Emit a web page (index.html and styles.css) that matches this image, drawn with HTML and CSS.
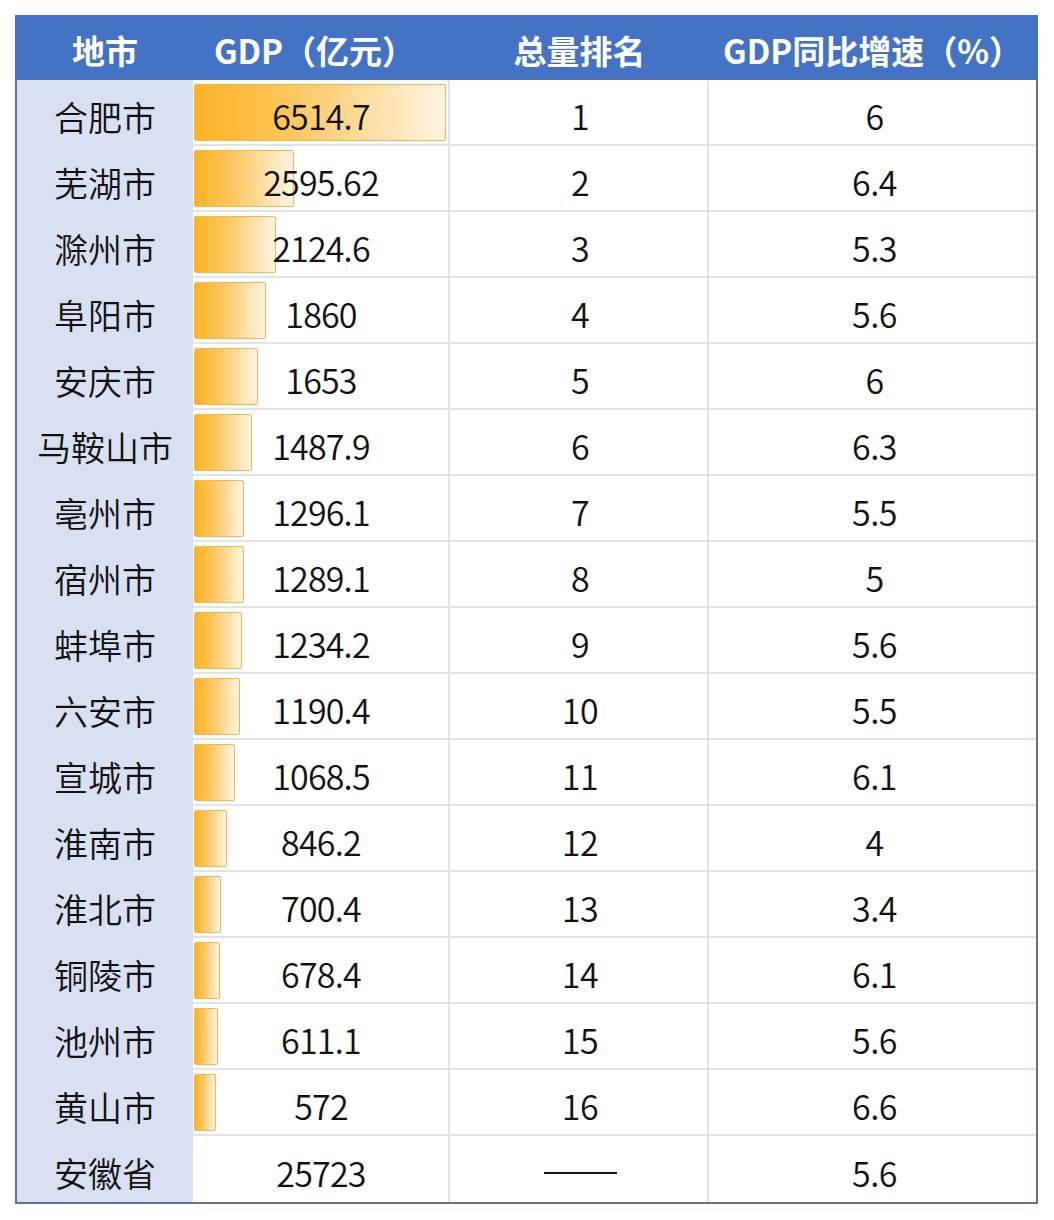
FILE: index.html
```html
<!DOCTYPE html>
<html lang="zh-CN">
<head>
<meta charset="utf-8">
<title>安徽省各地市GDP</title>
<link rel="stylesheet" href="styles.css">
</head>
<body>
<div class="table">
  <div class="head">
    <div class="hc">地市</div>
    <div class="hc">GDP（亿元）</div>
    <div class="hc">总量排名</div>
    <div class="hc">GDP同比增速（%）</div>
  </div>
  <div class="row"><div class="city">合肥市</div><div class="gdp"><span class="bar" style="width:252px"></span><span class="num">6514.7</span></div><div class="rank">1</div><div class="rate">6</div></div>
  <div class="row"><div class="city">芜湖市</div><div class="gdp"><span class="bar" style="width:100px"></span><span class="num">2595.62</span></div><div class="rank">2</div><div class="rate">6.4</div></div>
  <div class="row"><div class="city">滁州市</div><div class="gdp"><span class="bar" style="width:82px"></span><span class="num">2124.6</span></div><div class="rank">3</div><div class="rate">5.3</div></div>
  <div class="row"><div class="city">阜阳市</div><div class="gdp"><span class="bar" style="width:72px"></span><span class="num">1860</span></div><div class="rank">4</div><div class="rate">5.6</div></div>
  <div class="row"><div class="city">安庆市</div><div class="gdp"><span class="bar" style="width:64px"></span><span class="num">1653</span></div><div class="rank">5</div><div class="rate">6</div></div>
  <div class="row"><div class="city">马鞍山市</div><div class="gdp"><span class="bar" style="width:58px"></span><span class="num">1487.9</span></div><div class="rank">6</div><div class="rate">6.3</div></div>
  <div class="row"><div class="city">亳州市</div><div class="gdp"><span class="bar" style="width:50px"></span><span class="num">1296.1</span></div><div class="rank">7</div><div class="rate">5.5</div></div>
  <div class="row"><div class="city">宿州市</div><div class="gdp"><span class="bar" style="width:50px"></span><span class="num">1289.1</span></div><div class="rank">8</div><div class="rate">5</div></div>
  <div class="row"><div class="city">蚌埠市</div><div class="gdp"><span class="bar" style="width:48px"></span><span class="num">1234.2</span></div><div class="rank">9</div><div class="rate">5.6</div></div>
  <div class="row"><div class="city">六安市</div><div class="gdp"><span class="bar" style="width:46px"></span><span class="num">1190.4</span></div><div class="rank">10</div><div class="rate">5.5</div></div>
  <div class="row"><div class="city">宣城市</div><div class="gdp"><span class="bar" style="width:41px"></span><span class="num">1068.5</span></div><div class="rank">11</div><div class="rate">6.1</div></div>
  <div class="row"><div class="city">淮南市</div><div class="gdp"><span class="bar" style="width:33px"></span><span class="num">846.2</span></div><div class="rank">12</div><div class="rate">4</div></div>
  <div class="row"><div class="city">淮北市</div><div class="gdp"><span class="bar" style="width:27px"></span><span class="num">700.4</span></div><div class="rank">13</div><div class="rate">3.4</div></div>
  <div class="row"><div class="city">铜陵市</div><div class="gdp"><span class="bar" style="width:26px"></span><span class="num">678.4</span></div><div class="rank">14</div><div class="rate">6.1</div></div>
  <div class="row"><div class="city">池州市</div><div class="gdp"><span class="bar" style="width:24px"></span><span class="num">611.1</span></div><div class="rank">15</div><div class="rate">5.6</div></div>
  <div class="row"><div class="city">黄山市</div><div class="gdp"><span class="bar" style="width:22px"></span><span class="num">572</span></div><div class="rank">16</div><div class="rate">6.6</div></div>
  <div class="row last"><div class="city">安徽省</div><div class="gdp"><span class="num">25723</span></div><div class="rank"><span class="dash"></span></div><div class="rate">5.6</div></div>
</div>
</body>
</html>
```

FILE: styles.css
```css
html, body {
  margin: 0;
  padding: 0;
  background: #ffffff;
}

body {
  font-family: "Noto Sans CJK SC", "Noto Sans", sans-serif;
  color: #111111;
}

.table {
  margin: 15px 0 0 15px;
  width: 1023px;
  border: 2px solid #61718f;
  border-top: none;
  box-sizing: border-box;
}

.head,
.row {
  display: grid;
  grid-template-columns: 176px 257px 259px 1fr;
}

.head {
  height: 65px;
  background: #4472c4;
  margin: 0 -2px 0 -2px;
  padding: 0 2px;
  color: #ffffff;
  font-weight: 700;
  font-size: 33px;
}

.hc {
  display: flex;
  align-items: center;
  justify-content: center;
  padding-top: 4px;
}

.hc:nth-child(2) {
  padding-left: 0;
  padding-right: 14px;
}

.row {
  height: 66px;
  font-size: 34px;
  font-weight: 350;
}

.row > div {
  display: flex;
  align-items: center;
  justify-content: center;
  box-sizing: border-box;
  padding-top: 7px;
}

.city {
  background: #d8e0f1;
}

.gdp,
.rank,
.rate {
  border-bottom: 2px solid #e3e3e3;
}

.gdp,
.rank {
  border-right: 2px solid #e3e3e3;
}

.row.last .gdp,
.row.last .rank,
.row.last .rate {
  border-bottom: none;
}

.row > .gdp {
  display: grid;
  padding: 4px 0 3px 1px;
  justify-content: stretch;
  align-items: stretch;
}

.bar,
.num {
  grid-area: 1 / 1;
}

.bar {
  justify-self: start;
  box-sizing: border-box;
  border: 1.5px solid #f4b64a;
  border-radius: 2px;
  background: linear-gradient(to right, #fbb224 0%, #fcc458 35%, #fde2ad 75%, #fef4e4 100%);
}

.num {
  align-self: center;
  justify-self: center;
  letter-spacing: -0.8px;
  padding-top: 5px;
}

.rank,
.rate {
  letter-spacing: -0.5px;
}

.rank {
  padding-left: 3px;
}

.rate {
  padding-left: 4px;
}

.dash {
  display: block;
  width: 73px;
  height: 2px;
  background: #111111;
  margin-top: 0;
}
```
